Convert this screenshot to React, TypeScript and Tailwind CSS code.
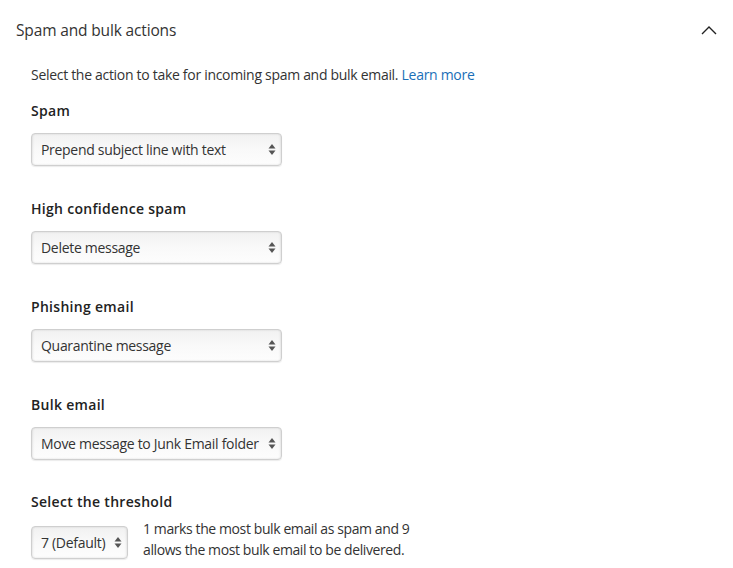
const Select = ({ value, width }: { value: string; width: string }) => (
  <div
    className={`${width} h-[33px] flex items-center justify-between pl-[9px] pr-[5px] rounded-[4px] border border-[#cfcfcf] bg-gradient-to-b from-[#f1f1f1] via-[#f9f9f9] to-[#fdfdfd] shadow-[inset_1px_0_2px_rgba(0,0,0,0.08),inset_-1px_0_2px_rgba(0,0,0,0.08),0_1px_1px_rgba(0,0,0,0.08)]`}
  >
    <span className="text-[14px] text-[#333] whitespace-nowrap tracking-[-0.3px]">{value}</span>
    <svg width="8" height="13" viewBox="0 0 8 13" className="shrink-0">
      <path d="M4 1 L7.5 5.5 H0.5 Z" fill="#555" />
      <path d="M4 12 L7.5 7.5 H0.5 Z" fill="#555" />
    </svg>
  </div>
)

const Field = ({ label, value }: { label: string; value: string }) => (
  <div className="flex flex-col">
    <div className="text-[14px] font-semibold text-[#222] leading-[20px] tracking-[0.3px]">{label}</div>
    <div className="mt-[12px]">
      <Select value={value} width="w-[251px]" />
    </div>
  </div>
)

export default function App() {
  return (
    <div
      className="w-[733px] h-[568px] bg-white overflow-hidden"
      style={{ fontFamily: '"Open Sans", "Noto Sans", sans-serif' }}
    >
      {/* Section header */}
      <div className="flex items-center justify-between pl-[16px] pr-[16px] pt-[19px]">
        <h1 className="text-[15.5px] text-[#333] leading-[22px] tracking-[-0.15px]">Spam and bulk actions</h1>
        <svg width="16" height="10" viewBox="0 0 16 10">
          <path d="M1 9 L8 2 L15 9" fill="none" stroke="#222" strokeWidth="1.4" />
        </svg>
      </div>

      <div className="pl-[31px] pt-[24px]">
        <p className="text-[14px] text-[#333] leading-[20px] tracking-[-0.3px]">
          Select the action to take for incoming spam and bulk email.{" "}
          <a className="text-[#1a6fb8]">Learn more</a>
        </p>

        <div className="mt-[16px] flex flex-col gap-[33px]">
          <Field label="Spam" value="Prepend subject line with text" />
          <Field label="High confidence spam" value="Delete message" />
          <Field label="Phishing email" value="Quarantine message" />
          <Field label="Bulk email" value="Move message to Junk Email folder" />
          <div className="flex flex-col -mt-[1px]">
            <div className="text-[14px] font-semibold text-[#222] leading-[20px] tracking-[0.3px]">
              Select the threshold
            </div>
            <div className="mt-[12px] flex items-center gap-[15px]">
              <Select value="7 (Default)" width="w-[97px]" />
              <p className="text-[14px] text-[#333] leading-[21px] tracking-[-0.4px] -mt-[6px]">
                1 marks the most bulk email as spam and 9
                <br />
                allows the most bulk email to be delivered.
              </p>
            </div>
          </div>
        </div>
      </div>
    </div>
  )
}
